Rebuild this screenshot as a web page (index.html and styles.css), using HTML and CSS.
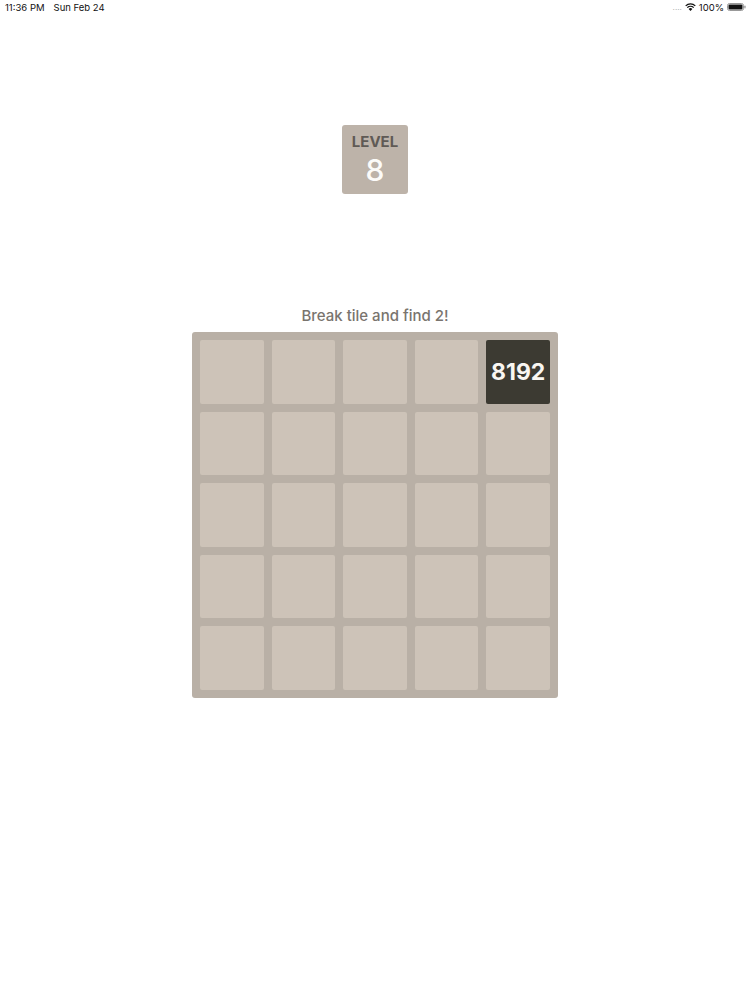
FILE: index.html
```html
<!DOCTYPE html>
<html>
<head>
<meta charset="utf-8">
<link rel="stylesheet" href="styles.css">
</head>
<body>
<div class="status">
  <div class="status-left"><span>11:36 PM</span><span>Sun Feb 24</span></div>
  <div class="status-right">
    <span class="dots">....</span>
    <svg class="wifi" width="11" height="8" viewBox="0 0 11 8"><path d="M5.5 8 L3.6 5.9 A2.8 2.8 0 0 1 7.4 5.9 Z" fill="#111"/><path d="M2.3 4.6 A4.6 4.6 0 0 1 8.7 4.6" stroke="#111" stroke-width="1.3" fill="none"/><path d="M0.7 2.9 A6.9 6.9 0 0 1 10.3 2.9" stroke="#111" stroke-width="1.3" fill="none"/></svg>
    <span>100%</span>
    <svg class="battery" width="19" height="8" viewBox="0 0 19 8"><rect x="0.5" y="0.5" width="16" height="7" rx="2" fill="none" stroke="#999" stroke-width="1"/><rect x="1.5" y="1.5" width="14" height="5" rx="1" fill="#111"/><rect x="17.3" y="2.6" width="1.3" height="2.8" rx="0.6" fill="#999"/></svg>
  </div>
</div>
<main class="page">
  <div class="level">
    <div class="level-label">LEVEL</div>
    <div class="level-num">8</div>
  </div>
  <div class="hint">Break tile and find 2!</div>
  <div class="board">
    <div class="tile"></div><div class="tile"></div><div class="tile"></div><div class="tile"></div><div class="tile t8192">8192</div>
    <div class="tile"></div><div class="tile"></div><div class="tile"></div><div class="tile"></div><div class="tile"></div>
    <div class="tile"></div><div class="tile"></div><div class="tile"></div><div class="tile"></div><div class="tile"></div>
    <div class="tile"></div><div class="tile"></div><div class="tile"></div><div class="tile"></div><div class="tile"></div>
    <div class="tile"></div><div class="tile"></div><div class="tile"></div><div class="tile"></div><div class="tile"></div>
  </div>
</main>
</body>
</html>
```
FILE: styles.css
```css
html, body {
  margin: 0;
  padding: 0;
  background: #ffffff;
  font-family: Inter, "Noto Sans", "Liberation Sans", sans-serif;
}
.status {
  height: 14px;
  display: flex;
  justify-content: space-between;
  align-items: center;
  padding: 0 4px 0 5px;
  font-size: 9.5px;
  color: #111;
}
.status-left {
  display: flex;
  gap: 9px;
}
.status-right {
  display: flex;
  align-items: center;
  gap: 3px;
}
.dots {
  color: #aaa;
  font-size: 8px;
}
.page {
  display: flex;
  flex-direction: column;
  align-items: center;
}
.level {
  margin-top: 111px;
  width: 66px;
  height: 69px;
  background: #bdb3a9;
  border-radius: 3px;
  display: flex;
  flex-direction: column;
  align-items: center;
  box-sizing: border-box;
  padding-top: 8px;
}
.level-label {
  font-size: 15px;
  font-weight: 700;
  color: #5f5a55;
  line-height: 18px;
}
.level-num {
  margin-top: 3px;
  font-size: 30px;
  font-weight: 500;
  color: #fcfbf9;
  line-height: 32px;
}
.hint {
  margin-top: 113px;
  font-size: 15px;
  color: #79746e;
  line-height: 18px;
  font-weight: 500;
}
.board {
  margin-top: 7px;
  width: 366px;
  height: 366px;
  box-sizing: border-box;
  padding: 8px;
  background: #b9b0a6;
  border-radius: 3px;
  display: grid;
  grid-template-columns: repeat(5, 1fr);
  grid-template-rows: repeat(5, 1fr);
  gap: 8px;
}
.tile {
  background: #cdc3b8;
  border-radius: 2px;
  display: flex;
  align-items: center;
  justify-content: center;
}
.t8192 {
  background: #3c3a32;
  color: #f9f6f2;
  font-size: 23px;
  font-weight: 700;
}
```
